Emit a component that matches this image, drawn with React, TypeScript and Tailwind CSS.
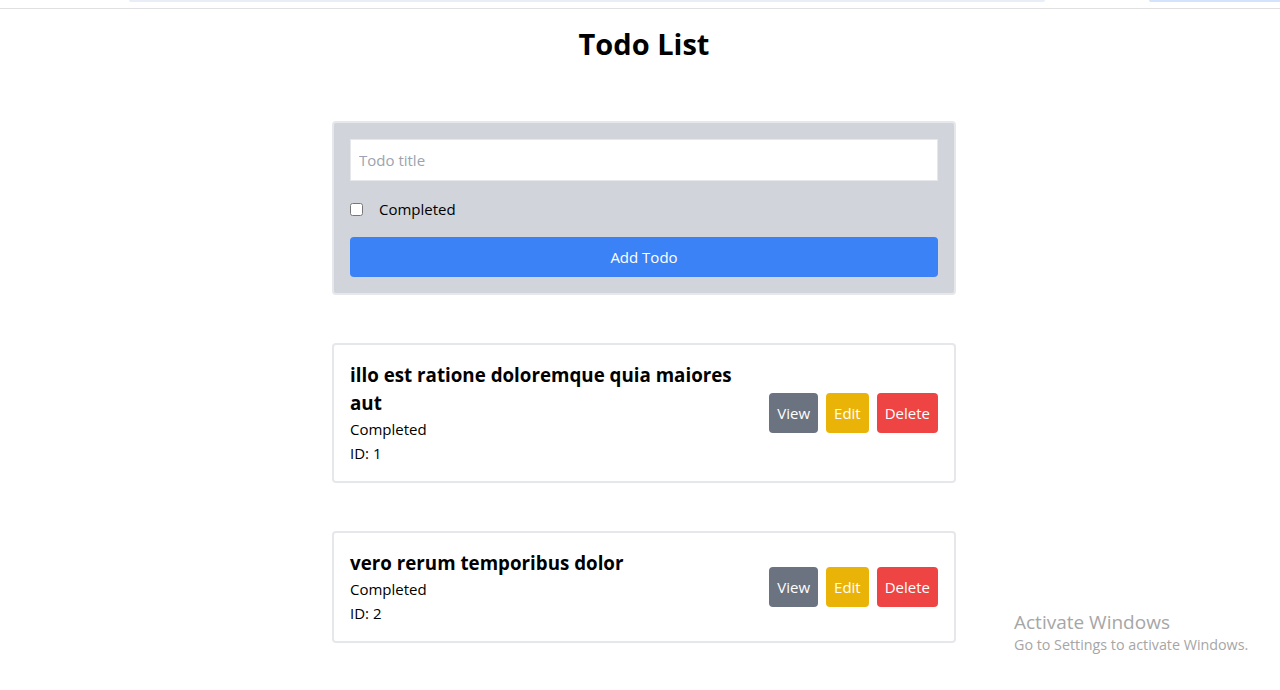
import { useState } from "react";

type Todo = { id: number; title: string; completed: boolean };

const initialTodos: Todo[] = [
  { id: 1, title: "illo est ratione doloremque quia maiores aut", completed: true },
  { id: 2, title: "vero rerum temporibus dolor", completed: true },
];

export default function App() {
  const [todos] = useState<Todo[]>(initialTodos);
  const [title, setTitle] = useState("");
  const [completed, setCompleted] = useState(false);

  return (
    <div className="relative min-h-[690px] bg-white text-black font-['Open_Sans',sans-serif]">
      {/* browser chrome remnant */}
      <div className="relative h-[9px] border-b border-[#e0e0e0]">
        <div className="absolute left-[129px] top-0 h-[2px] w-[916px] rounded-b bg-[#e8edf7]" />
        <div className="absolute left-[1149px] top-0 h-[2px] w-[131px] rounded-bl bg-[#d3e3fd]" />
      </div>

      <div className="pl-2">
        <div className="mx-auto w-[624px] pt-[17px]">
          <h1 className="text-center text-[29px] font-bold leading-[36px]">Todo List</h1>

          <form
            className="mt-[59px] rounded border-2 border-[#e5e7eb] bg-[#d1d5db] p-4"
            onSubmit={(e) => e.preventDefault()}
          >
            <input
              type="text"
              value={title}
              onChange={(e) => setTitle(e.target.value)}
              placeholder="Todo title"
              className="mb-4 block w-full border border-[#e5e7eb] bg-white px-2 py-2 text-[15px] leading-6 placeholder:text-[#9ca3af] outline-none"
            />
            <label className="mb-4 flex h-6 items-center text-[15px]">
              <input
                type="checkbox"
                checked={completed}
                onChange={(e) => setCompleted(e.target.checked)}
                className="h-[13px] w-[13px]"
              />
              <span className="ml-4">Completed</span>
            </label>
            <button
              type="submit"
              className="block h-10 w-full rounded bg-[#3b82f6] text-[15px] text-white"
            >
              Add Todo
            </button>
          </form>

          {todos.map((todo) => (
            <div
              key={todo.id}
              className="mt-12 flex items-center justify-between rounded border-2 border-[#e5e7eb] bg-white p-4"
            >
              <div className="w-[400px]">
                <h2 className="text-[18.75px] font-bold leading-7">{todo.title}</h2>
                <p className="text-[15px] leading-6">{todo.completed ? "Completed" : "Not Completed"}</p>
                <p className="text-[15px] leading-6">ID: {todo.id}</p>
              </div>
              <div className="flex gap-2">
                <button className="h-10 rounded bg-[#6b7280] px-2 text-[15px] text-white">View</button>
                <button className="h-10 rounded bg-[#eab308] px-2 text-[15px] text-white">Edit</button>
                <button className="h-10 rounded bg-[#ef4444] px-2 text-[15px] text-white">Delete</button>
              </div>
            </div>
          ))}
        </div>
      </div>

      {/* windows watermark */}
      <div className="absolute left-[1014px] top-[610px] text-[#a6a6a6]">
        <div className="text-[19px] leading-6">Activate Windows</div>
        <div className="text-[14.3px] leading-[22px]">Go to Settings to activate Windows.</div>
      </div>
    </div>
  );
}
